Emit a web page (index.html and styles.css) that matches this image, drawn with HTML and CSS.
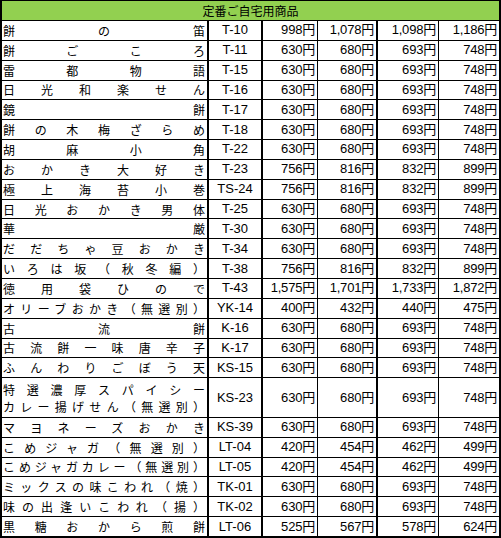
FILE: index.html
```html
<!DOCTYPE html>
<html lang="ja">
<head>
<meta charset="utf-8">
<title>定番ご自宅用商品</title>
<link rel="stylesheet" href="styles.css">
</head>
<body>
<table class="price-table">
  <colgroup>
    <col class="c-name"><col class="c-code"><col class="c-p1"><col class="c-p2"><col class="c-p3"><col class="c-p4">
  </colgroup>
  <thead>
    <tr class="head"><th colspan="6">定番ご自宅用商品</th></tr>
  </thead>
  <tbody>
    <tr><td class="name">餅の笛</td><td class="code">T-10</td><td class="p1">998円</td><td class="p2">1,078円</td><td class="p3">1,098円</td><td class="p4">1,186円</td></tr>
    <tr><td class="name">餅ごころ</td><td class="code">T-11</td><td class="p1">630円</td><td class="p2">680円</td><td class="p3">693円</td><td class="p4">748円</td></tr>
    <tr><td class="name">雷都物語</td><td class="code">T-15</td><td class="p1">630円</td><td class="p2">680円</td><td class="p3">693円</td><td class="p4">748円</td></tr>
    <tr><td class="name">日光和楽せん</td><td class="code">T-16</td><td class="p1">630円</td><td class="p2">680円</td><td class="p3">693円</td><td class="p4">748円</td></tr>
    <tr><td class="name">鏡餅</td><td class="code">T-17</td><td class="p1">630円</td><td class="p2">680円</td><td class="p3">693円</td><td class="p4">748円</td></tr>
    <tr><td class="name">餅の木梅ざらめ</td><td class="code">T-18</td><td class="p1">630円</td><td class="p2">680円</td><td class="p3">693円</td><td class="p4">748円</td></tr>
    <tr><td class="name">胡麻小角</td><td class="code">T-22</td><td class="p1">630円</td><td class="p2">680円</td><td class="p3">693円</td><td class="p4">748円</td></tr>
    <tr><td class="name">おかき大好き</td><td class="code">T-23</td><td class="p1">756円</td><td class="p2">816円</td><td class="p3">832円</td><td class="p4">899円</td></tr>
    <tr><td class="name">極上海苔小巻</td><td class="code">TS-24</td><td class="p1">756円</td><td class="p2">816円</td><td class="p3">832円</td><td class="p4">899円</td></tr>
    <tr><td class="name">日光おかき男体</td><td class="code">T-25</td><td class="p1">630円</td><td class="p2">680円</td><td class="p3">693円</td><td class="p4">748円</td></tr>
    <tr><td class="name">華厳</td><td class="code">T-30</td><td class="p1">630円</td><td class="p2">680円</td><td class="p3">693円</td><td class="p4">748円</td></tr>
    <tr><td class="name">だだちゃ豆おかき</td><td class="code">T-34</td><td class="p1">630円</td><td class="p2">680円</td><td class="p3">693円</td><td class="p4">748円</td></tr>
    <tr><td class="name">いろは坂（秋冬編）</td><td class="code">T-38</td><td class="p1">756円</td><td class="p2">816円</td><td class="p3">832円</td><td class="p4">899円</td></tr>
    <tr><td class="name">徳用袋ひので</td><td class="code">T-43</td><td class="p1">1,575円</td><td class="p2">1,701円</td><td class="p3">1,733円</td><td class="p4">1,872円</td></tr>
    <tr><td class="name">オリーブおかき（無選別）</td><td class="code">YK-14</td><td class="p1">400円</td><td class="p2">432円</td><td class="p3">440円</td><td class="p4">475円</td></tr>
    <tr><td class="name">古流餅</td><td class="code">K-16</td><td class="p1">630円</td><td class="p2">680円</td><td class="p3">693円</td><td class="p4">748円</td></tr>
    <tr><td class="name">古流餅一味唐辛子</td><td class="code">K-17</td><td class="p1">630円</td><td class="p2">680円</td><td class="p3">693円</td><td class="p4">748円</td></tr>
    <tr><td class="name">ふんわりごぼう天</td><td class="code">KS-15</td><td class="p1">630円</td><td class="p2">680円</td><td class="p3">693円</td><td class="p4">748円</td></tr>
    <tr class="double"><td class="name">特選濃厚スパイシー<br>カレー揚げせん（無選別）</td><td class="code">KS-23</td><td class="p1">630円</td><td class="p2">680円</td><td class="p3">693円</td><td class="p4">748円</td></tr>
    <tr><td class="name">マヨネーズおかき</td><td class="code">KS-39</td><td class="p1">630円</td><td class="p2">680円</td><td class="p3">693円</td><td class="p4">748円</td></tr>
    <tr><td class="name">こめジャガ（無選別）</td><td class="code">LT-04</td><td class="p1">420円</td><td class="p2">454円</td><td class="p3">462円</td><td class="p4">499円</td></tr>
    <tr><td class="name">こめジャガカレー（無選別）</td><td class="code">LT-05</td><td class="p1">420円</td><td class="p2">454円</td><td class="p3">462円</td><td class="p4">499円</td></tr>
    <tr><td class="name">ミックスの味こわれ（焼）</td><td class="code">TK-01</td><td class="p1">630円</td><td class="p2">680円</td><td class="p3">693円</td><td class="p4">748円</td></tr>
    <tr><td class="name">味の出逢いこわれ（揚）</td><td class="code">TK-02</td><td class="p1">630円</td><td class="p2">680円</td><td class="p3">693円</td><td class="p4">748円</td></tr>
    <tr class="last"><td class="name">黒糖おから煎餅</td><td class="code">LT-06</td><td class="p1">525円</td><td class="p2">567円</td><td class="p3">578円</td><td class="p4">624円</td></tr>
  </tbody>
</table>
</body>
</html>
```

FILE: styles.css
```css
html, body {
  margin: 0;
  padding: 0;
  background: #ffffff;
}

.price-table {
  width: 501px;
  table-layout: fixed;
  border-collapse: separate;
  border-spacing: 0;
  border-left: 2px solid #000;
  border-top: 1px solid #000;
  font-family: "Liberation Sans", "Noto Sans CJK JP", sans-serif;
  color: #000;
}

.c-name { width: 207px; }
.c-code { width: 54px; }
.c-p1 { width: 55px; }
.c-p2 { width: 60px; }
.c-p3 { width: 61px; }
.c-p4 { width: 62px; }

.price-table th,
.price-table td {
  box-sizing: border-box;
  border-right: 1px solid #000;
  border-bottom: 1px solid #000;
  padding: 0;
  vertical-align: middle;
  white-space: nowrap;
  overflow: hidden;
}

.head th {
  height: 20px;
  background: #92d050;
  font-family: "Noto Sans CJK JP", sans-serif;
  font-size: 12px;
  font-weight: normal;
  line-height: 16px;
  text-align: center;
  border-right: 2px solid #000;
}

.price-table tbody tr { height: 19.85px; }
.price-table tbody tr.double { height: 39.7px; }
.price-table tbody tr.last { height: 20.85px; }
.price-table tbody tr.last td { border-bottom-width: 2px; }

.name {
  font-family: "Noto Sans CJK JP", sans-serif;
  font-size: 12px;
  line-height: 17px;
  padding: 0 2px 0 1px !important;
  text-align: justify;
  text-align-last: justify;
  text-justify: inter-character;
  white-space: normal !important;
  border-right-width: 2px !important;
}

.code {
  font-size: 13px;
  line-height: 16px;
  text-align: center;
  border-right-width: 2px !important;
}

.p1, .p2, .p3, .p4 {
  font-size: 13px;
  line-height: 16px;
  text-align: right;
  padding-right: 2px !important;
  letter-spacing: -0.2px;
}

.p2 { border-right-width: 2px !important; }
.p4 { border-right-width: 2px !important; }
```
